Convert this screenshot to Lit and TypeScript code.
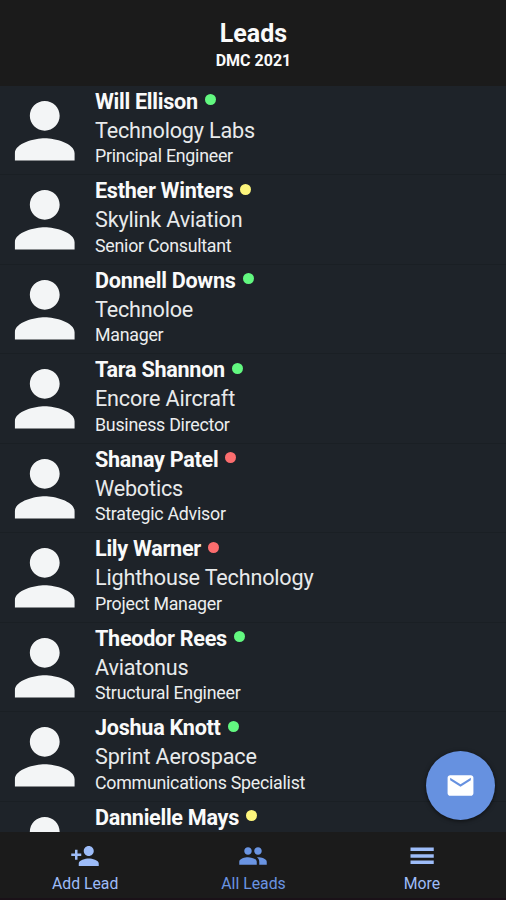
import { LitElement, html, css, svg } from "lit";
import { customElement } from "lit/decorators.js";

type Status = "green" | "yellow" | "red";

interface Lead {
  name: string;
  company: string;
  role: string;
  status: Status;
}

const LEADS: Lead[] = [
  { name: "Will Ellison", company: "Technology Labs", role: "Principal Engineer", status: "green" },
  { name: "Esther Winters", company: "Skylink Aviation", role: "Senior Consultant", status: "yellow" },
  { name: "Donnell Downs", company: "Technoloe", role: "Manager", status: "green" },
  { name: "Tara Shannon", company: "Encore Aircraft", role: "Business Director", status: "green" },
  { name: "Shanay Patel", company: "Webotics", role: "Strategic Advisor", status: "red" },
  { name: "Lily Warner", company: "Lighthouse Technology", role: "Project Manager", status: "red" },
  { name: "Theodor Rees", company: "Aviatonus", role: "Structural Engineer", status: "green" },
  { name: "Joshua Knott", company: "Sprint Aerospace", role: "Communications Specialist", status: "green" },
  { name: "Dannielle Mays", company: "", role: "", status: "yellow" },
];

const person = svg`<path d="M12 12c2.21 0 4-1.79 4-4s-1.79-4-4-4-4 1.79-4 4 1.79 4 4 4zm0 2c-2.67 0-8 1.34-8 4v2h16v-2c0-2.66-5.33-4-8-4z"/>`;
const personAdd = svg`<path d="M15 12c2.21 0 4-1.79 4-4s-1.79-4-4-4-4 1.79-4 4 1.79 4 4 4zm-9-2V7H4v3H1v2h3v3h2v-3h3v-2H6zm9 4c-2.67 0-8 1.34-8 4v2h16v-2c0-2.66-5.33-4-8-4z"/>`;
const people = svg`<path d="M16 11c1.66 0 2.99-1.34 2.99-3S17.66 5 16 5c-1.66 0-3 1.34-3 3s1.34 3 3 3zm-8 0c1.66 0 2.99-1.34 2.99-3S9.66 5 8 5C6.34 5 5 6.34 5 8s1.34 3 3 3zm0 2c-2.33 0-7 1.17-7 3.5V19h14v-2.5c0-2.33-4.67-3.5-7-3.5zm8 0c-.29 0-.62.02-.97.05 1.16.84 1.97 1.97 1.97 3.45V19h6v-2.5c0-2.33-4.67-3.5-7-3.5z"/>`;
const menu = svg`<path d="M2.8 5.2h18.6V8H2.8zM2.8 10.5h18.6v2.8H2.8zM2.8 15.5h18.6v2.8H2.8z"/>`;
const mail = svg`<path d="M20 4H4c-1.1 0-1.99.9-1.99 2L2 18c0 1.1.9 2 2 2h16c1.1 0 2-.9 2-2V6c0-1.1-.9-2-2-2zm0 4l-8 5-8-5V6l8 5 8-5v2z"/>`;

@customElement("lead-row")
export class LeadRow extends LitElement {
  static properties = { lead: { attribute: false } };
  declare lead: Lead;

  static styles = css`
    :host {
      display: flex;
      box-sizing: border-box;
      height: 89.55px;
      flex: none;
      border-bottom: 1px solid #1a1f24;
    }
    .avatar {
      flex: none;
      width: 89.5px;
      height: 89.5px;
      fill: #f3f5f6;
    }
    .text {
      padding-left: 5.5px;
      white-space: nowrap;
    }
    .name {
      display: flex;
      align-items: center;
      height: 31px;
      font-size: 21.6px;
      letter-spacing: -0.28px;
      font-weight: 700;
      color: #fafafa;
    }
    .dot {
      width: 11px;
      height: 11px;
      border-radius: 50%;
      margin: 0 0 3px 7px;
    }
    .green { background: #62f880; }
    .yellow { background: #fdf57c; }
    .red { background: #fb6d6e; }
    .company {
      height: 27.5px;
      line-height: 27.5px;
      font-size: 21.6px;
      letter-spacing: -0.18px;
      color: #e8eaeb;
    }
    .role {
      height: 24px;
      line-height: 24px;
      font-size: 17.8px;
      letter-spacing: -0.25px;
      color: #eceeef;
    }
  `;

  render() {
    const { name, company, role, status } = this.lead;
    return html`
      <svg class="avatar" viewBox="0 0 24 24">${person}</svg>
      <div class="text">
        <div class="name"><span>${name}</span><span class="dot ${status}"></span></div>
        <div class="company">${company}</div>
        <div class="role">${role}</div>
      </div>
    `;
  }
}

@customElement("app-root")
export class AppRoot extends LitElement {
  static styles = css`
    :host {
      display: flex;
      flex-direction: column;
      position: relative;
      height: 900px;
      overflow: hidden;
      background: #1b1b1b;
      font-family: Roboto, sans-serif;
    }
    header {
      flex: none;
      box-sizing: border-box;
      height: 85.5px;
      padding: 18px 0 0 1px;
      text-align: center;
      color: #fafafa;
      font-weight: 700;
    }
    .title {
      font-size: 25px;
      line-height: 31px;
    }
    .subtitle {
      font-size: 16px;
      line-height: 24px;
    }
    main {
      flex: 1;
      min-height: 0;
      overflow: hidden;
      display: flex;
      flex-direction: column;
      background: #1e2329;
    }
    nav {
      flex: none;
      box-sizing: border-box;
      height: 68px;
      padding-left: 1px;
      display: grid;
      grid-template-columns: repeat(3, 1fr);
      border-bottom: 2px solid #1a1118;
    }
    .tab {
      display: flex;
      flex-direction: column;
      align-items: center;
      padding-top: 9px;
      color: #9dbcf8;
      font-size: 15.8px;
      line-height: 20px;
    }
    .tab.active { color: #6a94e2; }
    .tab svg {
      width: 30px;
      height: 30px;
      fill: currentColor;
      margin-bottom: 3px;
    }
    .fab {
      position: absolute;
      right: 11px;
      bottom: 80.5px;
      width: 69px;
      height: 69px;
      border-radius: 50%;
      display: grid;
      place-items: center;
      background: #6691e0;
      box-shadow: 0 1px 4px rgba(0, 0, 0, 0.6);
    }
    .fab svg {
      width: 31px;
      height: 31px;
      fill: #fff;
    }
  `;

  render() {
    return html`
      <header>
        <div class="title">Leads</div>
        <div class="subtitle">DMC 2021</div>
      </header>
      <main>${LEADS.map((lead) => html`<lead-row .lead=${lead}></lead-row>`)}</main>
      <nav>
        <div class="tab"><svg viewBox="0 0 24 24">${personAdd}</svg>Add Lead</div>
        <div class="tab active"><svg viewBox="0 0 24 24">${people}</svg>All Leads</div>
        <div class="tab"><svg viewBox="0 0 24 24">${menu}</svg>More</div>
      </nav>
      <div class="fab"><svg viewBox="0 0 24 24">${mail}</svg></div>
    `;
  }
}
